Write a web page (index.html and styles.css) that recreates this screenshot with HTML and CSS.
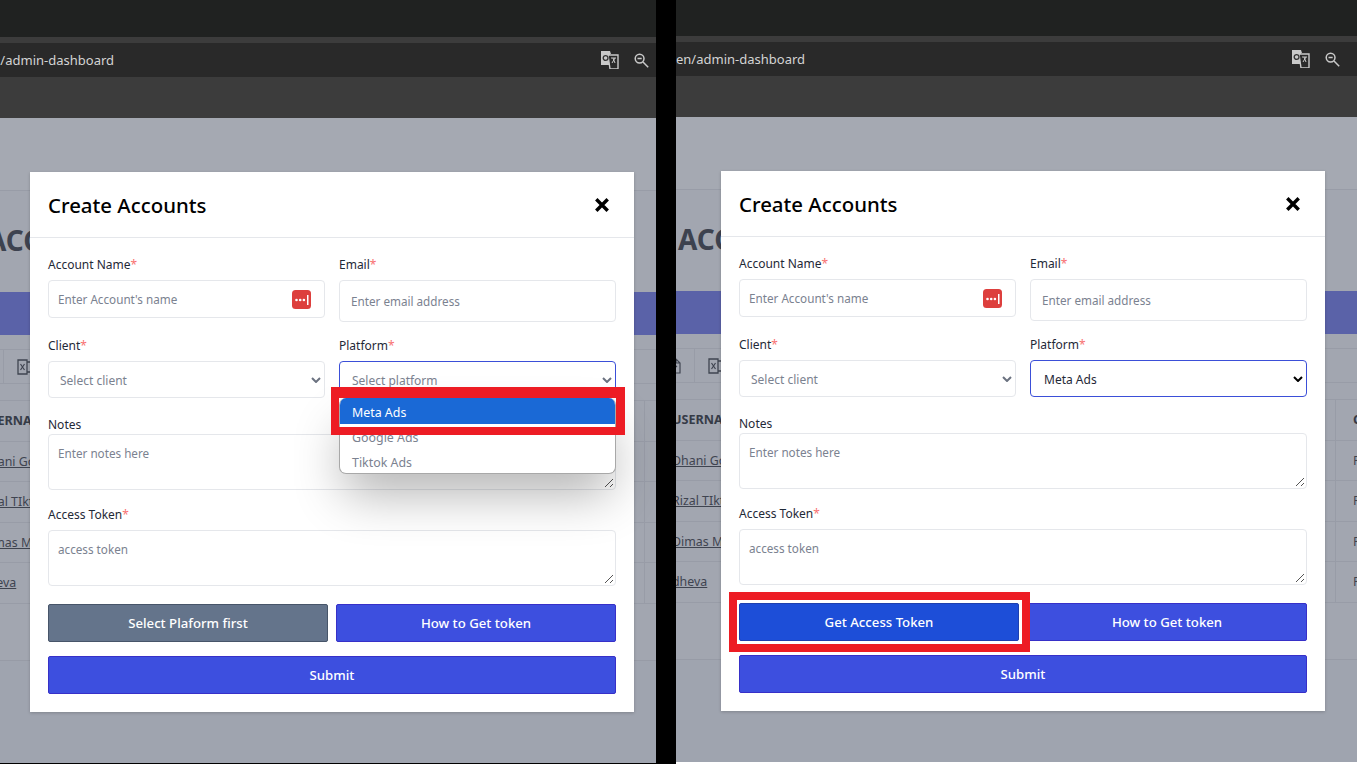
FILE: index.html
```html
<!DOCTYPE HTML>
<html>
<head>
	<meta charset="utf-8" />
	<title>Create Accounts</title>
	<link rel="stylesheet" href="styles.css">
</head>
<body>

<div class="pane pane-left">
<div class="screen">
	<div class="tabbar"></div>
	<div class="strip"></div>
	<div class="urlbar">
		<span class="url">en/admin-dashboard</span>
		<svg class="ic-translate" viewBox="0 0 18 18"><path d="M0 0h9l1 3h-1v11H0z" fill="#c9c9c9"/><path d="M7 4h10v14H9z" fill="#2a2a2a" stroke="#c9c9c9" stroke-width="1.4"/><circle cx="4.6" cy="7" r="2.4" fill="none" stroke="#333" stroke-width="1.3"/><path d="M10 7h5M12 7l2 5M14 7l-3 5" fill="none" stroke="#c9c9c9"/></svg>
		<svg class="ic-zoom" viewBox="0 0 15 15"><circle cx="5.6" cy="5.6" r="4.4" fill="none" stroke="#c9c9c9" stroke-width="1.5"/><path d="M3.5 5.6h4.2M9 9l5.2 5.2" stroke="#c9c9c9" stroke-width="1.5"/></svg>
	</div>
	<div class="toolbar"></div>
	<div class="page">
		<div class="page-head"></div>
		<div class="card">
			<h2 class="page-title">ACCOUNTS</h2>
			<div class="purple"></div>
			<div class="tools">
				<span class="tool">
					<svg class="ic-file" viewBox="0 0 12 16"><path d="M1 1h6l4 4v10H1zM7 1v4h4M4 9l2-2 2 2" fill="none" stroke="#3f4450" stroke-width="1.2"/></svg>
				</span>
				<span class="tool">
					<svg class="ic-xls" viewBox="0 0 16 16"><path d="M1 1h9v14H1zM10 3h5M10 13h5M15 3v10" fill="none" stroke="#3f4450" stroke-width="1.3"/><path d="M3.5 5l4 6M7.5 5l-4 6" stroke="#3f4450" stroke-width="1.2"/></svg>
				</span>
			</div>
			<div class="table">
				<div class="row head"><span class="name">USERNAME</span><span class="last">CLIENT</span></div>
				<div class="row"><a class="name">Dhani Gojek</a><span class="last">P</span></div>
				<div class="row"><a class="name">Rizal TIktok</a><span class="last">R</span></div>
				<div class="row"><a class="name">Dimas Meta</a><span class="last">P</span></div>
				<div class="row"><a class="name">dheva</a><span class="last">P</span></div>
			</div>
		</div>
	</div>

	<div class="modal">
		<div class="modal-head">
			<h3>Create Accounts</h3>
			<svg class="ic-close" viewBox="0 0 14 14"><path d="M2 2l10 10M12 2L2 12" stroke="#000" stroke-width="3"/></svg>
		</div>
		<div class="modal-body">
			<div class="grid">
				<div class="field">
					<label>Account Name<i>*</i></label>
					<div class="input input-short"><span class="ph">Enter Account's name</span>
						<svg class="ic-pass" viewBox="0 0 19 19"><rect width="19" height="19" rx="3.5" fill="#dd3f3d"/><circle cx="4.5" cy="10" r="1.3" fill="#fff"/><circle cx="8.2" cy="10" r="1.3" fill="#fff"/><circle cx="11.9" cy="10" r="1.3" fill="#fff"/><rect x="15" y="5" width="1.5" height="10" fill="#fff"/></svg>
					</div>
				</div>
				<div class="field">
					<label>Email<i>*</i></label>
					<div class="input input-tall"><span class="ph">Enter email address</span></div>
				</div>
				<div class="field">
					<label>Client<i>*</i></label>
					<div class="select"><span class="ph">Select client</span>
						<svg class="chev" viewBox="0 0 10 6"><path d="M1 1l4 4 4-4" fill="none" stroke="#6b7280" stroke-width="2"/></svg>
					</div>
				</div>
				<div class="field">
					<label>Platform<i>*</i></label>
					<div class="select focus"><span class="ph">Select platform</span>
						<svg class="chev" viewBox="0 0 10 6"><path d="M1 1l4 4 4-4" fill="none" stroke="#6b7280" stroke-width="2"/></svg>
					</div>
				</div>
			</div>
			<div class="field field-notes">
				<label>Notes</label>
				<div class="area"><span class="ph">Enter notes here</span><svg class="grip" viewBox="0 0 10 10"><path d="M1 9l8-8M6 9l3-3" stroke="#555" fill="none"/></svg></div>
			</div>
			<div class="field field-token">
				<label>Access Token<i>*</i></label>
				<div class="area"><span class="ph">access token</span><svg class="grip" viewBox="0 0 10 10"><path d="M1 9l8-8M6 9l3-3" stroke="#555" fill="none"/></svg></div>
			</div>
			<div class="btn-row">
				<button class="btn btn-gray">Select Plaform first</button>
				<button class="btn">How to Get token</button>
			</div>
			<button class="btn btn-wide">Submit</button>
		</div>
	</div>

	<div class="dropdown">
		<div class="opt opt-on">Meta Ads</div>
		<div class="opt">Google Ads</div>
		<div class="opt">Tiktok Ads</div>
	</div>
	<div class="mark mark-option"></div>
</div>
</div>

<div class="divider"></div>

<div class="pane pane-right">
<div class="screen">
	<div class="tabbar"></div>
	<div class="strip"></div>
	<div class="urlbar">
		<span class="url">en/admin-dashboard</span>
		<svg class="ic-translate" viewBox="0 0 18 18"><path d="M0 0h9l1 3h-1v11H0z" fill="#c9c9c9"/><path d="M7 4h10v14H9z" fill="#2a2a2a" stroke="#c9c9c9" stroke-width="1.4"/><circle cx="4.6" cy="7" r="2.4" fill="none" stroke="#333" stroke-width="1.3"/><path d="M10 7h5M12 7l2 5M14 7l-3 5" fill="none" stroke="#c9c9c9"/></svg>
		<svg class="ic-zoom" viewBox="0 0 15 15"><circle cx="5.6" cy="5.6" r="4.4" fill="none" stroke="#c9c9c9" stroke-width="1.5"/><path d="M3.5 5.6h4.2M9 9l5.2 5.2" stroke="#c9c9c9" stroke-width="1.5"/></svg>
	</div>
	<div class="toolbar"></div>
	<div class="page">
		<div class="page-head"></div>
		<div class="card">
			<h2 class="page-title">ACCOUNTS</h2>
			<div class="purple"></div>
			<div class="tools">
				<span class="tool">
					<svg class="ic-file" viewBox="0 0 12 16"><path d="M1 1h6l4 4v10H1zM7 1v4h4M4 9l2-2 2 2" fill="none" stroke="#3f4450" stroke-width="1.2"/></svg>
				</span>
				<span class="tool">
					<svg class="ic-xls" viewBox="0 0 16 16"><path d="M1 1h9v14H1zM10 3h5M10 13h5M15 3v10" fill="none" stroke="#3f4450" stroke-width="1.3"/><path d="M3.5 5l4 6M7.5 5l-4 6" stroke="#3f4450" stroke-width="1.2"/></svg>
				</span>
			</div>
			<div class="table">
				<div class="row head"><span class="name">USERNAME</span><span class="last">CLIENT</span></div>
				<div class="row"><a class="name">Dhani Gojek</a><span class="last">P</span></div>
				<div class="row"><a class="name">Rizal TIktok</a><span class="last">R</span></div>
				<div class="row"><a class="name">Dimas Meta</a><span class="last">P</span></div>
				<div class="row"><a class="name">dheva</a><span class="last">P</span></div>
			</div>
		</div>
	</div>

	<div class="modal">
		<div class="modal-head">
			<h3>Create Accounts</h3>
			<svg class="ic-close" viewBox="0 0 14 14"><path d="M2 2l10 10M12 2L2 12" stroke="#000" stroke-width="3"/></svg>
		</div>
		<div class="modal-body">
			<div class="grid">
				<div class="field">
					<label>Account Name<i>*</i></label>
					<div class="input input-short"><span class="ph">Enter Account's name</span>
						<svg class="ic-pass" viewBox="0 0 19 19"><rect width="19" height="19" rx="3.5" fill="#dd3f3d"/><circle cx="4.5" cy="10" r="1.3" fill="#fff"/><circle cx="8.2" cy="10" r="1.3" fill="#fff"/><circle cx="11.9" cy="10" r="1.3" fill="#fff"/><rect x="15" y="5" width="1.5" height="10" fill="#fff"/></svg>
					</div>
				</div>
				<div class="field">
					<label>Email<i>*</i></label>
					<div class="input input-tall"><span class="ph">Enter email address</span></div>
				</div>
				<div class="field">
					<label>Client<i>*</i></label>
					<div class="select"><span class="ph">Select client</span>
						<svg class="chev" viewBox="0 0 10 6"><path d="M1 1l4 4 4-4" fill="none" stroke="#6b7280" stroke-width="2"/></svg>
					</div>
				</div>
				<div class="field">
					<label>Platform<i>*</i></label>
					<div class="select focus"><span class="val">Meta Ads</span>
						<svg class="chev" viewBox="0 0 10 6"><path d="M1 1l4 4 4-4" fill="none" stroke="#000" stroke-width="2"/></svg>
					</div>
				</div>
			</div>
			<div class="field field-notes">
				<label>Notes</label>
				<div class="area"><span class="ph">Enter notes here</span><svg class="grip" viewBox="0 0 10 10"><path d="M1 9l8-8M6 9l3-3" stroke="#555" fill="none"/></svg></div>
			</div>
			<div class="field field-token">
				<label>Access Token<i>*</i></label>
				<div class="area"><span class="ph">access token</span><svg class="grip" viewBox="0 0 10 10"><path d="M1 9l8-8M6 9l3-3" stroke="#555" fill="none"/></svg></div>
			</div>
			<div class="btn-row">
				<button class="btn btn-strong">Get Access Token</button>
				<button class="btn">How to Get token</button>
			</div>
			<button class="btn btn-wide">Submit</button>
		</div>
	</div>
	<div class="mark mark-button"></div>
</div>
</div>

</body>
</html>
```

FILE: styles.css
```css
* {box-sizing: border-box;}

body {
	margin: 0;
	height: 764px;
	overflow: hidden;
	display: flex;
	background: #000;
	font-family: "Noto Sans", "Open Sans", sans-serif;
	font-size: 12px;
	color: #1f2937;
}

.pane {
	height: 764px;
	flex: none;
	overflow: hidden;
}
.pane-left {width: 656px;}
.pane-right {width: 681px; background: #fff;}
.divider {width: 20px; flex: none; background: #000;}

/* the right shot sits 15px further left in page terms and 1px higher */
.screen {position: relative; width: 1000px; height: 764px;}
.pane-left .screen {margin-left: -15px;}
.pane-right .screen {margin-top: -1px;}

.tabbar {height: 37px; background: #202221;}
.strip {height: 6px; background: #3c3c3c;}
.urlbar {
	height: 34px;
	background: #292929;
	display: flex;
	align-items: center;
	color: #d4d4d4;
	font-size: 13px;
}
.url {width: 616px;}
.ic-translate {width: 18px; height: 18px; margin-right: 15px;}
.ic-zoom {width: 15px; height: 15px;}
.toolbar {height: 41px; background: #3c3c3c;}

.page {height: 645px; background: #9fa4af;}
.page-head {height: 72px; background: #a5a9b2;}

.card {
	height: 471px;
	background: #a2a6b0;
	border-top: 1px solid #989ca7;
	border-bottom: 1px solid #979ba6;
	overflow: hidden;
}
.page-title {
	margin: 31px 0 0 2px;
	height: 70px;
	font-size: 28px;
	line-height: 36px;
	font-weight: 700;
	color: #3d424f;
}
.purple {height: 43px; background: #5a62a8;}
.tools {
	display: flex;
	margin-top: 14px;
	height: 35px;
	border-top: 1px solid #989ca7;
	border-bottom: 1px solid #989ca7;
}
.tool {
	width: 34px;
	display: flex;
	align-items: center;
	justify-content: center;
	border-right: 1px solid #989ca7;
}
.tool:first-child {width: 19px; justify-content: flex-start;}
.ic-file {width: 12px; height: 16px; margin-left: -7px;}
.ic-xls {width: 16px; height: 16px; margin-left: 8px;}

.table {margin-top: 16px; width: 1010px;}
.row {
	height: 40.5px;
	display: flex;
	align-items: center;
	justify-content: space-between;
	border-top: 1px solid #989ca7;
	color: #3f4450;
	font-size: 12.4px;
	position: relative;
}
.row:last-child {border-bottom: 1px solid #989ca7; height: 41.5px;}
.row.head {font-weight: 700; font-size: 12.6px; color: #363b47;}
.name {margin-left: -4px;}
a.name {text-decoration: underline;}
.last {
	width: 351px;
	height: 100%;
	padding-left: 17px;
	border-left: 1px solid #989ca7;
	display: flex;
	align-items: center;
}

/* modal */
.modal {
	position: absolute;
	left: 45px;
	top: 172px;
	width: 604px;
	height: 540px;
	background: #fff;
	box-shadow: 0 1px 3px rgba(0,0,0,.2);
}
.modal-head {
	height: 66px;
	padding: 0 24px 0 18px;
	display: flex;
	align-items: center;
	justify-content: space-between;
	border-bottom: 1px solid #e5e7eb;
}
.modal-head h3 {
	margin: 0;
	font-size: 20.4px;
	line-height: 28px;
	font-weight: 500;
	color: #000;
}
.ic-close {width: 16px; height: 16px;}
.modal-body {padding: 18px;}
.grid {
	display: grid;
	grid-template-columns: 277px 277px;
	column-gap: 14px;
}
label {
	display: block;
	height: 24px;
	line-height: 18px;
	color: #1f2937;
}
label i {color: #f87171; font-style: normal;}
.input, .select, .area {
	background: #fff;
	border: 1px solid #e5e7eb;
	border-radius: 4px;
	display: flex;
	align-items: center;
	color: #6b7280;
}
.input {padding: 0 14px 0 9px; justify-content: space-between;}
.input-short {height: 38px;}
.input-tall {height: 42px; margin-bottom: -4px; padding-left: 11px;}
.ph {color: #7b8290; font-size: 11.7px;}
.ic-pass {width: 19px; height: 19px; margin-right: -1px;}
.select {height: 37px; padding: 1px 3px 0 11px; justify-content: space-between;}
.select .ph {font-size: 12px;}
.select.focus {border-color: #3b4fd8; padding-left: 12px;}
.select .chev {margin-top: -1px;}
.val {color: #1f2937; margin-left: 1px;}
.chev {width: 10px; height: 6px;}
.grid .field:nth-child(n+3) {margin-top: 19px;}
.field-notes {margin-top: 17px;}
.field-notes label {height: 19px; padding-top: 1px;}
.field-token {margin-top: 14px;}
.field-token label {height: 26px; padding-top: 2px;}
.area {
	position: relative;
	height: 56px;
	padding: 10px 9px;
	align-items: flex-start;
}
.grip {position: absolute; right: 1px; bottom: 1px; width: 10px; height: 10px;}
.btn-row {
	display: flex;
	gap: 8px;
	margin-top: 18px;
}
.btn {
	height: 38px;
	width: 280px;
	border: 1px solid #3730c8;
	border-radius: 2px;
	background: #3d4fdf;
	color: #fff;
	font-family: inherit;
	font-size: 13.2px;
	font-weight: 500;
	padding: 0;
}
.btn-gray {background: #64748b; border-color: #475569;}
.btn-strong {background: #1d4ed8; border-color: #1e40af;}
.btn-wide {width: 568px; margin-top: 14px; display: block;}

/* open select list */
.dropdown {
	position: absolute;
	left: 354px;
	top: 398px;
	width: 277px;
	height: 76px;
	background: #fff;
	border: 1px solid #a8a8a8;
	border-top: 0;
	border-radius: 7px;
	overflow: hidden;
	box-shadow: 0 25px 50px -5px rgba(0,0,0,.3);
	color: #7b8290;
	font-size: 12.4px;
}
.dropdown .opt {height: 25px; line-height: 27px; padding-left: 12px;}
.dropdown .opt-on {height: 26px; line-height: 29px; background: #1a69d6; color: #fff;}

/* red annotation boxes */
.mark {position: absolute; border: 8px solid #ed1c24;}
.mark-option {left: 346px; top: 387px; width: 294px; height: 48px; border-width: 11px 9px 8px 8px;}
.mark-button {left: 53px; top: 593px; width: 301px; height: 60px;}
```
